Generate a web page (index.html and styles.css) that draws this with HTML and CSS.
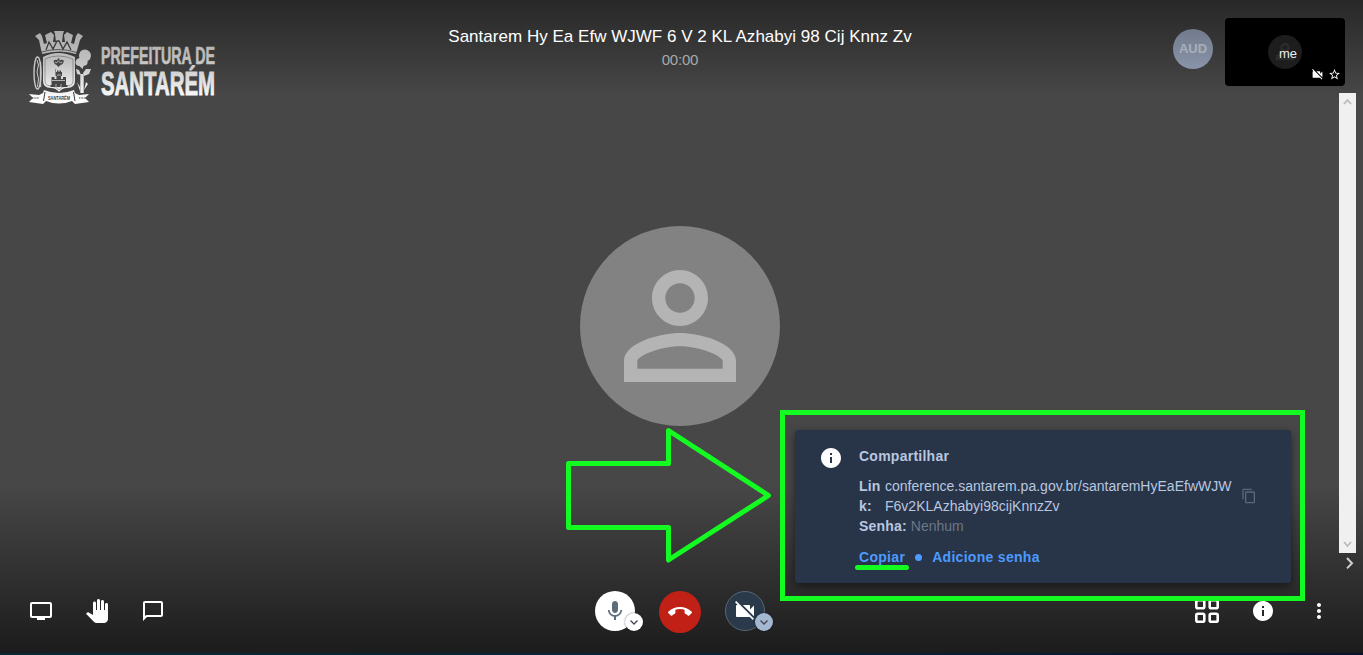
FILE: index.html
```html
<!DOCTYPE html>
<html lang="pt-BR">
<head>
<meta charset="utf-8">
<title>Conferência</title>
<link rel="stylesheet" href="styles.css">
</head>
<body>
<div class="app">
  <header class="header">
    <svg class="logo" width="190" height="80" viewBox="28 28 190 80">
      <defs>
        <linearGradient id="silver" x1="0" y1="30" x2="0" y2="100" gradientUnits="userSpaceOnUse">
          <stop offset="0" stop-color="#a8a8a8"/><stop offset=".45" stop-color="#c2c2c2"/><stop offset="1" stop-color="#ffffff"/>
        </linearGradient>
      </defs>
      <g fill="url(#silver)">
        <path d="M35 36l5-3 2 3 2 8 3-1-2-8 6-3 3 3-1 7h3l-1-8-1-3h10l-1 3-1 8h3l-1-7 3-3 6 3-2 8 3 1 2-8 2-3 5 3-3 4-4 14q-16-5-34 0l-3-14z"/>
        <path d="M43 57q15-8 32 0v24q0 7-8 7-5 0-8 4-3-4-8-4-8 0-8-7z"/>
        <path d="M29 94l10 1 4-2 1-3q15 6 30 0l1 3 4 2 10-1-4 4 4 4-14 2-3-3q-13 5-26 0l-3 3-14-2 4-4z"/>
        <path d="M80.300 74h3.400v19h-3.400z"/>
        <path d="M75.500 62a5 5 0 0 1 4-4 6 6 0 1 1 8 3 4 4 0 0 1-1 4l-3 1-1 3-3-3a4 4 0 0 1-4-4z"/>
        <path d="M76 69l3 1 2 5-4-1zM83 73l3-4 5 0-2 5-5 2zM77 82l3 5v4zM84 90l2-8 2 2z"/>
      </g>
      <g fill="none" stroke="#3b3b3b">
        <path d="M40 52.500q18-6 37 0" stroke-width=".8"/>
        <path d="M46 50l3-8 4 7 4-8 2 0 4 8 4-7 4 8" stroke-width="1.300"/>
        <path d="M45 59q13-6 28 0v22q0 5-7 5-4 0-7 4-3-4-7-4-7 0-7-5z" stroke-width=".4"/>
        <path d="M45 92l-1.500 9M73.500 92l1.500 9" stroke-width="1"/>
        <path d="M32 98h7M79 98h7" stroke-width="1.200" stroke-dasharray="1 .6"/>
      </g>
      <g fill="none" stroke="#c8c8c8" stroke-width="1.400">
        <ellipse cx="37.500" cy="73" rx="3.500" ry="16"/><path d="M37 60l1.500 5-1.500 7 1.500 7-1 8" stroke-width="1"/><path d="M40.500 62v25"/>
      </g>
      <g fill="#454545">
        <path d="M56 69v3h1v-1.500h1.500V72h1v-1.500h1.500V72h1v4h-1v3h2v-2h3v8h1.500v2H50.500v-2h1v-8h3v2h2v-3h-1v-7z"/>
        <path d="M53.500 61q2-2 4-.5v-2h2v2q3-1.500 4.500.5-.5 3-3.500 4l-2 2-2-2q-2.500-1-3-4z"/>
      </g>
      <path d="M55 62q2 2 3.500-1 2 3 4 1M52 80.500h13M56 84v3M61 84v3M57 75h4" fill="none" stroke="#d0d0d0" stroke-width=".8"/>
      <text x="48" y="99.500" class="logo-ribbon" textLength="22" lengthAdjust="spacingAndGlyphs">SANTARÉM</text>
      <g fill="url(#silver)" stroke="url(#silver)" class="logo-words">
        <text x="101" y="64.300" font-size="24" stroke-width=".6" textLength="114" lengthAdjust="spacingAndGlyphs">PREFEITURA DE</text>
        <text x="101" y="95.300" font-size="34" stroke-width="1" textLength="114" lengthAdjust="spacingAndGlyphs">SANTARÉM</text>
      </g>
    </svg>
    <div class="subject">
      <h1 class="subject-title">Santarem Hy Ea Efw WJWF 6 V 2 KL Azhabyi 98 Cij Knnz Zv</h1>
      <div class="subject-timer">00:00</div>
    </div>
    <div class="filmstrip">
      <div class="quality">AUD</div>
      <div class="thumb">
        <div class="thumb-avatar">
          <svg width="24" height="24" viewBox="0 0 24 24" fill="none" stroke="#2c2c2c" stroke-width="2.500"><circle cx="12" cy="7.500" r="3.500"/><path d="M4 19v-3q8-5 16 0v3z"/></svg>
          <span class="thumb-name">me</span>
        </div>
        <div class="thumb-status">
          <svg width="13" height="13" viewBox="0 0 24 24" fill="#fff"><path d="M21 6.500l-4 4V7c0-.55-.45-1-1-1H9.820L21 17.180V6.500zM3.270 2L2 3.270 4.730 6H4c-.55 0-1 .45-1 1v10c0 .55.45 1 1 1h12c.21 0 .39-.08.540-.18L19.730 21 21 19.730 3.270 2z"/></svg>
          <svg width="13" height="13" viewBox="0 0 24 24" fill="#fff"><path d="M22 9.240l-7.190-.62L12 2 9.190 8.630 2 9.240l5.460 4.730L5.820 21 12 17.270 18.180 21l-1.630-7.030L22 9.240zM12 15.400l-3.760 2.270 1-4.280-3.320-2.880 4.380-.38L12 6.100l1.710 4.040 4.380.38-3.320 2.880 1 4.280L12 15.400z"/></svg>
        </div>
      </div>
    </div>
  </header>

  <main class="stage">
    <div class="avatar">
      <svg width="168" height="168" viewBox="0 0 24 24" fill="#b4b4b4"><path d="M12 5.900c1.160 0 2.100.94 2.100 2.100s-.94 2.100-2.100 2.100S9.900 9.160 9.900 8s.94-2.100 2.100-2.100m0 9c2.970 0 6.100 1.460 6.100 2.100v1.100H5.900V17c0-.64 3.130-2.100 6.100-2.100M12 4C9.790 4 8 5.790 8 8s1.790 4 4 4 4-1.790 4-4-1.790-4-4-4zm0 9c-2.670 0-8 1.340-8 4v3h16v-3c0-2.660-5.330-4-8-4z"/></svg>
    </div>
    <div class="scrollbar">
      <svg width="17" height="17" viewBox="0 0 17 17"><path d="M5 11l3.500-4 3.500 4"/></svg>
      <svg width="17" height="17" viewBox="0 0 17 17"><path d="M5 6l3.500 4L12 6"/></svg>
    </div>
  </main>

  <footer class="footer">
    <svg class="film-toggle" width="10" height="14" viewBox="0 0 10 14"><path d="M2 2l5 5.200-5 5.200"/></svg>
    <div class="toolbar">
      <div class="tools">
        <svg width="24" height="24" viewBox="0 0 24 24" fill="#fff"><path d="M21 3H3c-1.100 0-2 .9-2 2v12c0 1.100.9 2 2 2h5v2h8v-2h5c1.100 0 1.990-.9 1.990-2L23 5c0-1.100-.9-2-2-2zm0 14H3V5h18v12z"/></svg>
        <svg width="24" height="24" viewBox="0 0 24 24" fill="#fff"><path d="M23 5.500V20c0 2.200-1.800 4-4 4h-7.300c-1.080 0-2.100-.43-2.850-1.190L1 14.830s1.260-1.230 1.300-1.250c.22-.19.490-.29.790-.29.220 0 .42.060.6.160.04.010 4.310 2.460 4.310 2.460V4c0-.83.670-1.500 1.500-1.500S11 3.170 11 4v7h1V1.500c0-.83.670-1.500 1.500-1.500S15 .67 15 1.500V11h1V2.500c0-.83.670-1.500 1.500-1.500s1.500.67 1.500 1.500V11h1V5.500c0-.83.670-1.500 1.500-1.500s1.500.67 1.500 1.500z"/></svg>
        <svg width="24" height="24" viewBox="0 0 24 24" fill="#fff"><path d="M4 4h16v12H5.170L4 17.170V4m0-2c-1.100 0-1.990.9-1.990 2L2 22l4-4h14c1.100 0 2-.9 2-2V4c0-1.100-.9-2-2-2H4z"/></svg>
      </div>
      <div class="calls">
        <div class="round mic">
          <svg width="24" height="24" viewBox="0 0 24 24" fill="#5e6d7a"><path d="M12 14c1.660 0 2.990-1.340 2.990-3L15 5c0-1.660-1.340-3-3-3S9 3.340 9 5v6c0 1.660 1.340 3 3 3zm5.300-3c0 3-2.540 5.100-5.300 5.100S6.700 14 6.700 11H5c0 3.410 2.720 6.230 6 6.720V21h2v-3.280c3.280-.48 6-3.300 6-6.720h-1.700z"/></svg>
          <span class="more more-light"><svg width="10" height="10" viewBox="0 0 10 10"><path d="M1.500 3.500L5 7l3.500-3.500"/></svg></span>
        </div>
        <div class="round hangup">
          <svg width="24" height="24" viewBox="0 0 24 24" fill="#fff"><path d="M12 9c-1.600 0-3.150.25-4.600.72v3.100c0 .39-.23.740-.56.900-.98.490-1.870 1.120-2.660 1.850-.18.180-.43.280-.7.280-.28 0-.53-.11-.71-.29L.29 13.080c-.18-.17-.29-.42-.29-.7 0-.28.110-.53.290-.71C3.340 8.780 7.460 7 12 7s8.660 1.780 11.710 4.670c.18.180.29.430.29.710 0 .28-.11.530-.29.710l-2.480 2.480c-.18.180-.43.290-.71.290-.27 0-.52-.11-.7-.28-.79-.74-1.690-1.360-2.670-1.850-.33-.16-.56-.5-.56-.9v-3.100C15.150 9.250 13.600 9 12 9z"/></svg>
        </div>
        <div class="round cam">
          <svg width="24" height="24" viewBox="0 0 24 24" fill="#fff"><path d="M21 6.500l-4 4V7c0-.55-.45-1-1-1H9.820L21 17.180V6.500zM3.270 2L2 3.270 4.730 6H4c-.55 0-1 .45-1 1v10c0 .55.45 1 1 1h12c.21 0 .39-.08.540-.18L19.730 21 21 19.730 3.270 2z"/></svg>
          <span class="more more-blue"><svg width="10" height="10" viewBox="0 0 10 10"><path d="M1.500 3.500L5 7l3.500-3.500"/></svg></span>
        </div>
      </div>
      <div class="tools tools-end">
        <svg width="24" height="24" viewBox="0 0 24 24" fill="none" stroke="#fff" stroke-width="2.600"><rect x="1.300" y="1.300" width="8" height="8" rx="1.500"/><rect x="14.700" y="1.300" width="8" height="8" rx="1.500"/><rect x="1.300" y="14.700" width="8" height="8" rx="1.500"/><rect x="14.700" y="14.700" width="8" height="8" rx="1.500"/></svg>
        <svg width="24" height="24" viewBox="0 0 24 24" fill="#fff"><path d="M12 2C6.480 2 2 6.480 2 12s4.480 10 10 10 10-4.480 10-10S17.520 2 12 2zm1 15h-2v-6h2v6zm0-8h-2V7h2v2z"/></svg>
        <svg width="24" height="24" viewBox="0 0 24 24" fill="#fff"><path d="M12 8c1.100 0 2-.9 2-2s-.9-2-2-2-2 .9-2 2 .9 2 2 2zm0 2c-1.100 0-2 .9-2 2s.9 2 2 2 2-.9 2-2-.9-2-2-2zm0 6c-1.100 0-2 .9-2 2s.9 2 2 2 2-.9 2-2-.9-2-2-2z"/></svg>
      </div>
    </div>
    <div class="taskbar-edge"></div>
  </footer>

  <section class="share">
    <svg class="share-icon" width="24" height="24" viewBox="0 0 24 24" fill="#fff"><path d="M12 2C6.480 2 2 6.480 2 12s4.480 10 10 10 10-4.480 10-10S17.520 2 12 2zm1 15h-2v-6h2v6zm0-8h-2V7h2v2z"/></svg>
    <div class="share-body">
      <h2 class="share-title">Compartilhar</h2>
      <div class="share-link">
        <span class="share-label">Lin<br>k:</span>
        <span class="share-url">conference.santarem.pa.gov.br/santaremHyEaEfwWJW<br>F6v2KLAzhabyi98cijKnnzZv</span>
        <svg class="share-copy" width="16" height="16" viewBox="0 0 24 24" fill="#5c6878"><path d="M16 1H4c-1.100 0-2 .9-2 2v14h2V3h12V1zm3 4H8c-1.100 0-2 .9-2 2v14c0 1.100.9 2 2 2h11c1.100 0 2-.9 2-2V7c0-1.100-.9-2-2-2zm0 16H8V7h11v14z"/></svg>
      </div>
      <div class="share-password"><b>Senha:</b> <span class="muted">Nenhum</span></div>
      <div class="share-actions"><a class="copy-link">Copiar</a><i class="dot"></i><a>Adicione senha</a></div>
    </div>
  </section>
  <div class="highlight"></div>
  <svg class="arrow" width="210" height="140" viewBox="564 426 210 140"><path d="M568.500 463.500h100v-33L768.500 495.500 668.500 560v-32.500h-100z"/></svg>
</div>
</body>
</html>
```

FILE: styles.css
```css
* { box-sizing: border-box; }
body { margin: 0; background: #474747; font-family: "Liberation Sans", Arial, sans-serif; overflow: hidden; }
svg { display: block; flex: none; }
.app {
  position: relative;
  display: grid;
  grid-template-rows: 93px 460px 102px;
  height: 655px;
  background: linear-gradient(#282828 0, #474747 96px, #474747 485px, #1c1c1c 653px);
}
.header {
  display: grid;
  grid-template-columns: 1fr auto 1fr;
  align-items: start;
  padding-right: 3px;
}
.logo { margin: 28px 0 0 28px; overflow: visible; }
.logo-words { font-weight: bold; }
.logo-ribbon { font-size: 5px; font-weight: bold; fill: #444; }
.subject { padding-top: 27px; text-align: center; }
.subject-title { margin: 0; font-size: 17px; font-weight: normal; line-height: 20px; color: #fff; white-space: nowrap; letter-spacing: .02px; }
.subject-timer { margin-top: 3px; font-size: 15px; line-height: 20px; color: #a9a9a9; letter-spacing: -.2px; }
.filmstrip { display: flex; justify-content: flex-end; gap: 12px; padding: 18px 15px 0 0; }
.quality {
  width: 40px; height: 40px; margin-top: 11px;
  border-radius: 50%;
  background: linear-gradient(#727b8c, #8994aa);
  color: #a9afb9; font-size: 13px; font-weight: bold; line-height: 40px; text-align: center;
}
.thumb {
  width: 120px; height: 68px;
  display: flex; flex-direction: column; justify-content: space-between;
  padding: 17px 4px 5px;
  border-radius: 4px; background: #000;
}
.thumb-avatar { position: relative; display: grid; place-items: center; width: 34px; height: 34px; align-self: center; border-radius: 50%; background: #1d1d1d; }
.thumb-name { position: absolute; left: 11px; top: 11px; color: #eee; font-size: 13px; line-height: 16px; }
.thumb-status { display: flex; justify-content: flex-end; gap: 4px; margin-top: -1px; }

.stage { display: grid; grid-template-columns: 1fr 17px; padding-right: 7px; }
.avatar { width: 200px; height: 200px; margin: 133px 0 0 580px; display: grid; place-items: center; border-radius: 50%; background: #828282; }
.scrollbar { display: flex; flex-direction: column; justify-content: space-between; background: #f0f0f0; }
.scrollbar path { fill: none; stroke: #bababa; stroke-width: 1.8; }

.footer { display: flex; flex-direction: column; padding-top: 3px; }
.film-toggle { align-self: flex-end; margin-right: 8px; }
.film-toggle path { fill: none; stroke: #d0d0d0; stroke-width: 2; }
.toolbar { display: grid; grid-template-columns: 1fr auto 1fr; align-items: center; height: 42px; margin: 19px 32px 0 29px; }
.tools { display: flex; gap: 32px; }
.tools-end { justify-content: flex-end; }
.calls { display: flex; align-items: center; gap: 24px; }
.round { position: relative; display: grid; place-items: center; width: 40px; height: 40px; border-radius: 50%; }
.mic { background: #fff; }
.hangup { width: 42px; height: 42px; margin-top: 2px; background: #c02016; }
.cam { background: #2a3a4b; border: 1px solid #586574; }
.more { position: absolute; left: 30px; top: 22px; display: grid; place-items: center; width: 18px; height: 18px; border-radius: 50%; box-shadow: 0 0 2px rgba(0,0,0,.6); }
.more path { fill: none; stroke: #445; stroke-width: 1.3; }
.more-light { background: #fff; }
.more-blue { left: 29px; top: 21px; background: #a4b8d1; }
.taskbar-edge { height: 2px; margin-top: auto; background: linear-gradient(90deg, #062a36, #06243a 50%, #07142f); }

.share {
  position: absolute; left: 795px; top: 430px;
  display: flex; align-items: flex-start; gap: 16px;
  width: 496px; height: 153px; padding: 16px 24px;
  border-radius: 3px;
  background: #283447;
  box-shadow: 0 3px 8px rgba(0,0,0,.5);
  color: #b8c7e0; font-size: 14px; line-height: 20px;
}
.share-title { margin: 0 0 10px; font-size: 14px; line-height: 20px; letter-spacing: .25px; }
.share-link { display: flex; white-space: nowrap; }
.share-label { width: 26px; font-weight: bold; letter-spacing: .1px; }
.share-url { letter-spacing: .01px; }
.share-copy { margin: 12px 0 0 10px; }
.share-password b { letter-spacing: .2px; }
.muted { color: #6b7789; }
.share-actions { display: flex; align-items: center; margin-top: 11px; color: #4c9aff; font-weight: bold; letter-spacing: .3px; }
.copy-link { position: relative; }
.copy-link::after { content: ""; position: absolute; left: -4px; right: -4px; top: 18px; height: 5px; border-radius: 3px; background: #14fb21; }
.dot { width: 7px; height: 7px; margin: 0 10px; border-radius: 50%; background: #4c9aff; }
.highlight { position: absolute; left: 780px; top: 410px; width: 525px; height: 191px; border: 5px solid #14fb21; }
.arrow { position: absolute; left: 564px; top: 426px; }
.arrow path { fill: none; stroke: #14fb21; stroke-width: 5; stroke-linejoin: round; }
```
